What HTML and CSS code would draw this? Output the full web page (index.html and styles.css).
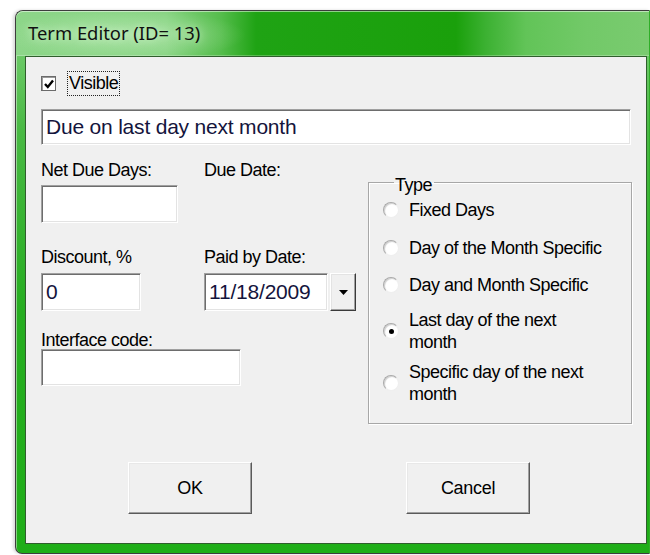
FILE: index.html
```html
<!DOCTYPE html>
<html>
<head>
<meta charset="utf-8">
<title>Term Editor</title>
<link rel="stylesheet" href="styles.css">
</head>
<body>
<div class="window">
  <div class="titlebar"><span class="title">Term Editor (ID= 13)</span></div>
  <div class="client">
    <div class="check-row">
      <span class="checkbox">
        <svg width="12" height="12" viewBox="0 0 12 12"><polyline points="2,6 4.8,9 10,2.6" fill="none" stroke="#000" stroke-width="2.4"/></svg>
      </span>
      <span class="focus">Visible</span>
    </div>

    <div class="textbox wide">Due on last day next month</div>

    <div class="middle">
      <div class="fields">
        <div class="pair first">
          <span class="lbl col1">Net Due Days:</span>
          <span class="lbl">Due Date:</span>
        </div>
        <div class="textbox net"></div>

        <div class="pair second">
          <span class="lbl col1">Discount, %</span>
          <span class="lbl">Paid by Date:</span>
        </div>
        <div class="pair inputs">
          <div class="col1"><div class="textbox disc">0</div></div>
          <div class="date-combo">
            <div class="textbox date">11/18/2009</div>
            <span class="drop">
              <svg width="9" height="5" viewBox="0 0 9 5"><polygon points="0,0 9,0 4.5,5" fill="#000"/></svg>
            </span>
          </div>
        </div>

        <span class="lbl third">Interface code:</span>
        <div class="textbox iface"></div>
      </div>

      <fieldset class="group">
        <legend>Type</legend>
        <div class="radio r-fixed"><span class="dot"></span><span class="rtext">Fixed Days</span></div>
        <div class="radio r-dom"><span class="dot"></span><span class="rtext">Day of the Month Specific</span></div>
        <div class="radio r-dam"><span class="dot"></span><span class="rtext">Day and Month Specific</span></div>
        <div class="radio r-last"><span class="dot on"></span><span class="rtext">Last day of the next<br>month</span></div>
        <div class="radio r-spec"><span class="dot"></span><span class="rtext">Specific day of the next<br>month</span></div>
      </fieldset>
    </div>

    <div class="buttons">
      <span class="btn">OK</span>
      <span class="btn">Cancel</span>
    </div>
  </div>
</div>
</body>
</html>
```

FILE: styles.css
```css
html, body {
  margin: 0;
  padding: 0;
  background: #ffffff;
  overflow: hidden;
  width: 650px;
  height: 555px;
}

/* dialog frame (its right edge runs on past the page) */
.window {
  margin: 10px 0 0 15px;
  width: 635px;
  height: 544px;
  box-sizing: border-box;
  border: 1px solid #3d3d3d;
  border-right-color: #2fae28;
  border-radius: 8px 0 0 7px;
  padding: 0 0 9px 9px;
  background: linear-gradient(to bottom, #7fd27a 0, #49b944 120px, #26ad20 300px, #1fae18 100%);
  box-shadow: inset 1px 1px 0 rgba(255,255,255,0.45), -2px 0 3px rgba(0,0,0,0.15);
  display: flex;
  flex-direction: column;
}

.titlebar {
  height: 45px;
  margin-left: -9px;
  border-radius: 7px 0 0 0;
  background:
    radial-gradient(ellipse 120px 26px at 110px 24px, rgba(200,240,195,0.55), rgba(200,240,195,0) 100%),
    linear-gradient(to right, #8dd689 0, #86d381 150px, #55bd4c 205px, #1fa314 240px, #1aa00b 440px, #3cb132 470px, #62c458 510px, #72c968 570px, #7acb70 100%);
  box-shadow: inset 0 1px 0 rgba(255,255,255,0.5), inset 0 -1px 0 rgba(255,255,255,0.25);
  display: flex;
  align-items: center;
  padding-left: 12px;
}

.title {
  font-family: "Noto Sans", "Open Sans", sans-serif;
  font-size: 18.4px;
  color: #111;
  padding-bottom: 2px;
  text-shadow: 0 0 8px rgba(230,255,225,0.9);
}

.client {
  width: 622px;
  height: 488px;
  box-sizing: border-box;
  border: 1px solid #2f5e2c;
  background: #f0f0f0;
  padding-left: 15px;
  font-family: "Liberation Sans", Arial, sans-serif;
  font-size: 18px;
  letter-spacing: -0.5px;
  color: #000;
}

/* Visible checkbox */
.check-row {
  margin-top: 14px;
  height: 25px;
  display: flex;
  align-items: center;
}
.checkbox {
  width: 15px;
  height: 15px;
  box-sizing: border-box;
  border: 1px solid #6b6b6b;
  box-shadow: inset 1px 1px 0 #9a9a9a;
  background: #fff;
  display: flex;
  align-items: center;
  justify-content: center;
}
.focus {
  margin-left: 11px;
  height: 25px;
  line-height: 23px;
  box-sizing: border-box;
  border: 1px dotted #222;
  padding: 0 1px;
}

/* sunken edit boxes */
.textbox {
  box-sizing: border-box;
  height: 38px;
  border: 1px solid;
  border-color: #a0a0a0 #ffffff #ffffff #a0a0a0;
  box-shadow: inset 1px 1px 0 #6d6d6d, inset -1px -1px 0 #e3e3e3;
  background: #fff;
  padding-left: 4px;
  display: flex;
  align-items: center;
  font-size: 21px;
  letter-spacing: -0.2px;
  color: #14143c;
}
.wide { margin-top: 13px; width: 590px; height: 36px; }
.net { margin-top: 5px; width: 137px; }
.disc { width: 100px; }
.date { width: 124px; }
.iface { width: 200px; height: 37px; }

.middle {
  display: flex;
  align-items: flex-start;
  margin-top: 15px;
}

.fields {
  width: 327px;
  display: flex;
  flex-direction: column;
  align-items: flex-start;
}

.lbl {
  line-height: 20px;
  white-space: nowrap;
}
.pair {
  display: flex;
  align-items: flex-start;
}
.col1 { width: 163px; }
.second { margin-top: 24px; }
.inputs { margin-top: 6px; }
.third { margin-top: 20px; line-height: 18px; }

.date-combo {
  display: flex;
  align-items: flex-start;
}
.drop {
  margin-left: 2px;
  width: 26px;
  height: 38px;
  box-sizing: border-box;
  border: 1px solid;
  border-color: #ffffff #3a3a3a #3a3a3a #ffffff;
  box-shadow: inset -1px -1px 0 #a0a0a0, inset 1px 1px 0 #e3e3e3;
  background: #f0f0f0;
  display: flex;
  align-items: center;
  justify-content: center;
}

/* Type group */
.group {
  margin: 12px 0 0 0;
  width: 264px;
  box-sizing: border-box;
  padding: 0 0 18px 14px;
  border: 1px solid #a7a7a7;
  box-shadow: 1px 1px 0 #fff, inset 1px 1px 0 #fff;
  min-width: 0;
}
.group legend {
  margin-left: 11px;
  padding: 6px 2px 0 1px;
  line-height: 14px;
}

.radio {
  display: flex;
  align-items: center;
  line-height: 22px;
}
.r-fixed { margin-top: 7px; }
.r-dom { margin-top: 16px; }
.r-dam { margin-top: 15px; }
.r-last { margin-top: 13px; }
.r-spec { margin-top: 8px; }

.dot {
  flex: none;
  width: 16px;
  height: 16px;
  box-sizing: border-box;
  border-radius: 50%;
  border: 1px solid;
  border-color: #a9a9a9 #eeeeee #eeeeee #a9a9a9;
  box-shadow: inset 1px 1px 1px #cfcfcf;
  background: #fff;
  margin-right: 10px;
  display: flex;
  align-items: center;
  justify-content: center;
}
.dot.on::after {
  content: "";
  width: 5px;
  height: 5px;
  border-radius: 50%;
  background: #000;
}

/* OK / Cancel */
.buttons {
  display: flex;
  margin-top: 38px;
  margin-left: 87px;
  gap: 154px;
}
.btn {
  width: 124px;
  height: 52px;
  box-sizing: border-box;
  border: 1px solid;
  border-color: #ffffff #5a5a5a #5a5a5a #ffffff;
  box-shadow: inset -1px -1px 0 #a0a0a0, inset 1px 1px 0 #e8e8e8;
  background: #f0f0f0;
  display: flex;
  align-items: center;
  justify-content: center;
  letter-spacing: -0.3px;
}
```
